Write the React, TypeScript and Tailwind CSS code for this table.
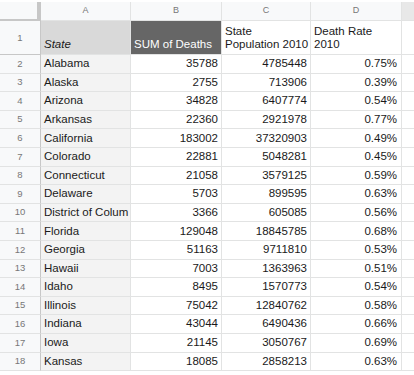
const rows: [string, string, string, string][] = [
  ['Alabama', '35788', '4785448', '0.75%'],
  ['Alaska', '2755', '713906', '0.39%'],
  ['Arizona', '34828', '6407774', '0.54%'],
  ['Arkansas', '22360', '2921978', '0.77%'],
  ['California', '183002', '37320903', '0.49%'],
  ['Colorado', '22881', '5048281', '0.45%'],
  ['Connecticut', '21058', '3579125', '0.59%'],
  ['Delaware', '5703', '899595', '0.63%'],
  ['District of Colum', '3366', '605085', '0.56%'],
  ['Florida', '129048', '18845785', '0.68%'],
  ['Georgia', '51163', '9711810', '0.53%'],
  ['Hawaii', '7003', '1363963', '0.51%'],
  ['Idaho', '8495', '1570773', '0.54%'],
  ['Illinois', '75042', '12840762', '0.58%'],
  ['Indiana', '43044', '6490436', '0.66%'],
  ['Iowa', '21145', '3050767', '0.69%'],
  ['Kansas', '18085', '2858213', '0.63%'],
]

const cell = 'border-r border-b border-[#e2e3e3] overflow-hidden whitespace-nowrap'

export default function App() {
  return (
    <div className="w-[414px] h-[375px] overflow-hidden bg-white text-[#1a1a1a] font-['Liberation_Sans',Arial,sans-serif] text-[11.5px]">
      <div className="h-[2px] bg-white" />
      {/* column letters */}
      <div className="flex h-[19px] bg-[#f8f9fa] text-[9px] text-[#777]">
        <div className="w-[41px] border-r-[4px] border-b-[2px] border-[#c7c7c7]" />
        <div className={`${cell} w-[90px] flex items-center justify-center`}>A</div>
        <div className={`${cell} w-[91px] flex items-center justify-center`}>B</div>
        <div className={`${cell} w-[89px] flex items-center justify-center`}>C</div>
        <div className={`${cell} w-[91px] flex items-center justify-center`}>D</div>
        <div className="flex-1 bg-[#e8e8e8] border-b border-[#e2e3e3]" />
      </div>

      {/* header row */}
      <div className="flex h-[34px] leading-[13px]">
        <div className="w-[41px] bg-[#f8f9fa] border-r border-b border-[#c7c7c7] flex items-center justify-center text-[9.5px] text-[#777]">1</div>
        <div className={`${cell} w-[90px] bg-[#d9d9d9] flex items-end px-[3px] pb-[3px] italic`}>State</div>
        <div className={`${cell} w-[91px] bg-[#666666] text-white flex items-end px-[3px] pb-[3px]`}>SUM of Deaths</div>
        <div className={`${cell} w-[89px] flex flex-col justify-end px-[3px] pb-[3px]`}>
          <span>State</span>
          <span>Population 2010</span>
        </div>
        <div className={`${cell} w-[91px] flex flex-col justify-end px-[3px] pb-[3px]`}>
          <span>Death Rate</span>
          <span>2010</span>
        </div>
        <div className="flex-1 border-b border-[#e2e3e3]" />
      </div>

      {rows.map(([state, deaths, pop, rate], i) => (
        <div key={state} className="flex h-[18.6px]">
          <div className="w-[41px] bg-[#f8f9fa] border-r border-b border-[#c7c7c7] border-b-[#e2e3e3] flex items-center justify-center text-[9.5px] text-[#777]">
            {i + 2}
          </div>
          <div className={`${cell} w-[90px] bg-[#f3f3f3] flex items-center px-[3px]`}>{state}</div>
          <div className={`${cell} w-[91px] flex items-center justify-end px-[3px]`}>{deaths}</div>
          <div className={`${cell} w-[89px] flex items-center justify-end px-[3px]`}>{pop}</div>
          <div className={`${cell} w-[91px] flex items-center justify-end px-[4px]`}>{rate}</div>
          <div className="flex-1 border-b border-[#e2e3e3]" />
        </div>
      ))}
    </div>
  )
}
